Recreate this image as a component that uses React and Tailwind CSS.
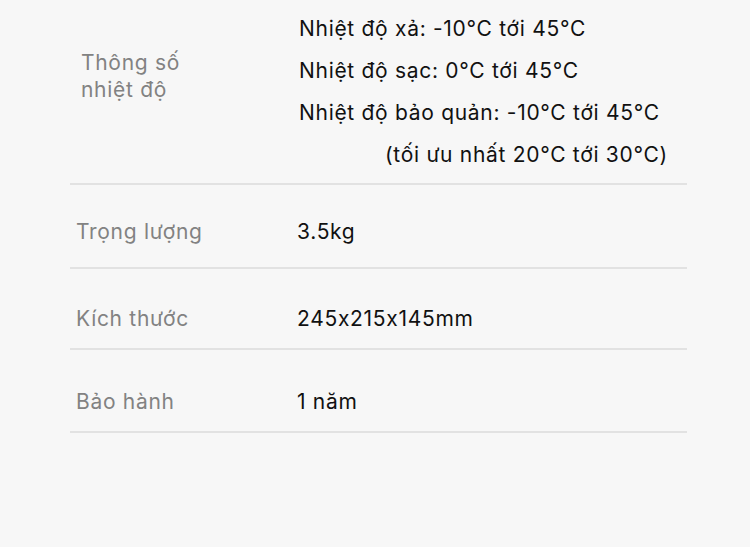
import React from 'react';

const font = { fontFamily: 'Inter, "Noto Sans", sans-serif', fontFeatureSettings: '"calt" 0' };

const rows = [
    { label: 'Trọng lượng', value: '3.5kg', h: 'h-[84px]', pt: 'pt-[12px]' },
    { label: 'Kích thước', value: '245x215x145mm', h: 'h-[81px]', pt: 'pt-[20px]' },
    { label: 'Bảo hành', value: '1 năm', h: 'h-[83px]', pt: 'pt-[22px]' },
];

export default function App() {
    return (
        <div className="w-[750px] h-[547px] bg-[#f7f7f7] overflow-hidden" style={font}>
            <div className="ml-[70px] w-[617px] tracking-[0.7px]">
                {/* Thông số nhiệt độ */}
                <div className="flex h-[185px] border-b-2 border-[#e2e2e2]">
                    <div className="w-[229px] pl-[11px] pt-[49px] text-[21px] leading-[27px] text-[#828282]">
                        Thông số<br />nhiệt độ
                    </div>
                    <div className="pt-[8px] text-[21px] leading-[42px] text-[#111]">
                        <p>Nhiệt độ xả: -10°C tới 45°C</p>
                        <p>Nhiệt độ sạc: 0°C tới 45°C</p>
                        <p>Nhiệt độ bảo quản: -10°C tới 45°C</p>
                        <p className="pl-[86px]">(tối ưu nhất 20°C tới 30°C)</p>
                    </div>
                </div>

                {rows.map((row, idx) => (
                    <div key={idx} className={`flex items-center ${row.h} ${row.pt} border-b-2 border-[#e2e2e2]`}>
                        <div className="w-[227px] pl-[6px] text-[21px] text-[#828282]">{row.label}</div>
                        <div className="text-[21px] text-[#111]">{row.value}</div>
                    </div>
                ))}
            </div>
        </div>
    );
}
